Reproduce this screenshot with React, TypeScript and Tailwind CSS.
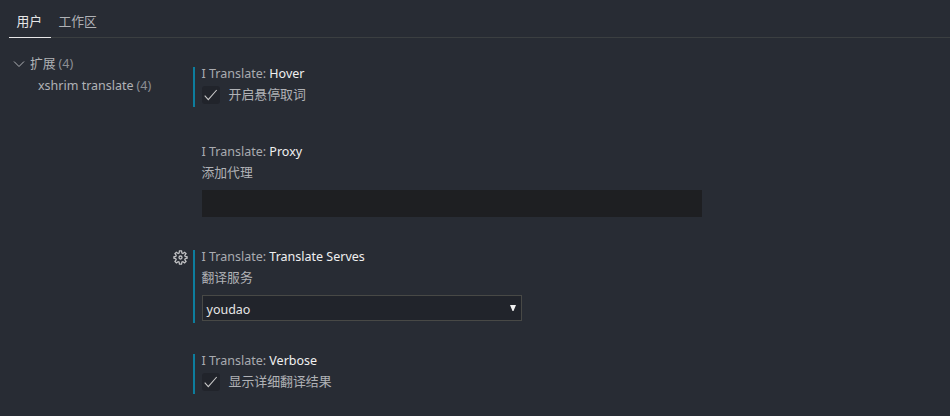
import type { ReactNode } from "react";

function Title({ children }: { children: string }) {
  return (
    <div className="-ml-[0.5px] h-[21px] leading-[14px] text-[12.5px] text-[#a9abb0] whitespace-pre">
      I Translate: <span className="text-[#f0f0f0]">{children}</span>
    </div>
  );
}

function Setting({
  title,
  modified,
  gear,
  className,
  children,
}: {
  title: string;
  modified?: boolean;
  gear?: boolean;
  className: string;
  children: ReactNode;
}) {
  return (
    <section className={`flex ${className}`}>
      <div className="w-[20px] shrink-0">{gear && <Gear />}</div>
      <div className={`w-[2px] mr-[7px] shrink-0 ${modified ? "bg-[#0d7d9d]" : ""}`} />
      <div>
        <Title>{title}</Title>
        {children}
      </div>
    </section>
  );
}

function Gear() {
  return (
    <svg width="15" height="15" viewBox="0 0 16 16" className="-mt-[0.5px]" fill="none" stroke="#c0c1c3" strokeWidth="1.4">
      <path d="M6.9 1h2.2l.4 2.3 1 .4 1.9-1.3 1.5 1.5-1.3 1.9.4 1L15 7.2v1.6l-2 .5-.4 1 1.3 1.9-1.5 1.5-1.9-1.3-1 .4L9.1 15H6.9l-.4-2.2-1-.4-1.9 1.3-1.5-1.5 1.3-1.9-.4-1L1 8.8V7.2l2-.4.4-1-1.3-1.9 1.5-1.5 1.9 1.3 1-.4z" />
      <circle cx="8" cy="8" r="1.6" />
    </svg>
  );
}

function Check({ label }: { label: string }) {
  return (
    <label className="-mt-[2px] flex h-[18px]">
      <span className="size-[18px] rounded-[3px] bg-[#21242b]">
        <svg width="18" height="18" viewBox="0 0 18 18" fill="none" stroke="#c8c8c8" strokeWidth="1.1">
          <path d="M2.7 9.7 6.3 13.6 14.7 4" />
        </svg>
      </span>
      <span className="-mt-px ml-[8.5px] text-[12.9px] leading-[18px]">{label}</span>
    </label>
  );
}

export default function App() {
  return (
    <div className="h-[416px] w-[950px] overflow-hidden bg-[#282c34] text-[12.8px] text-[#b0b2b6] [font-family:'Noto_Sans','Noto_Sans_CJK_SC',sans-serif]">
      <nav className="ml-[9px] flex h-[38px] border-b border-[#3b3f41]">
        <div className="h-[38px] w-[42px] border-b border-[#e7e7e7] pl-[7.5px] pt-[12px] leading-[18px] text-[#e7e7e7]">用户</div>
        <div className="pl-[7.5px] pt-[12px] leading-[18px]">工作区</div>
      </nav>
      <main className="flex">
        <aside className="w-[173px] shrink-0 pt-[15px]">
          <div className="flex h-[22px] items-center pl-[13px]">
            <svg width="12" height="12" viewBox="0 0 12 12" fill="none" stroke="#b0b2b6" className="mr-[5px]">
              <path d="M1 3.5 6 8.5 11 3.5" />
            </svg>
            <span className="-mt-px">扩展</span>
            <span className="ml-[3px] text-[12.5px] text-[#8c8f94]">(4)</span>
          </div>
          <div className="h-[22px] pl-[38px] text-[12.5px] leading-[22px]">
            xshrim translate<span className="ml-[3px] text-[#8c8f94]">(4)</span>
          </div>
        </aside>
        <div className="pt-[29px]">
          <Setting title="Hover" modified className="h-[40px]">
            <Check label="开启悬停取词" />
          </Setting>
          <Setting title="Proxy" className="mt-[38px] h-[72px]">
            <div className="-mt-px -ml-[0.5px] leading-[14px]">添加代理</div>
            <div className="mt-[11px] h-[27px] w-[500px] bg-[#1e1f22]" />
          </Setting>
          <Setting title="Translate Serves" modified gear className="mt-[33px] h-[73px]">
            <div className="-mt-px -ml-[0.5px] leading-[14px]">翻译服务</div>
            <div className="mt-[11px] flex h-[26px] w-[320px] items-center justify-between border border-[#484946] bg-[#21242b] pl-[4px] pr-[5px] text-[12.5px] text-[#e6e6e6]">
              <span className="-ml-[0.5px] pt-[4px]">youdao</span>
              <svg width="6" height="6" viewBox="0 0 6 6" fill="#f0f0f0">
                <path d="M0 0h6L3.5 6h-1z" />
              </svg>
            </div>
          </Setting>
          <Setting title="Verbose" modified className="mt-[31px] h-[40px]">
            <Check label="显示详细翻译结果" />
          </Setting>
        </div>
      </main>
    </div>
  );
}
